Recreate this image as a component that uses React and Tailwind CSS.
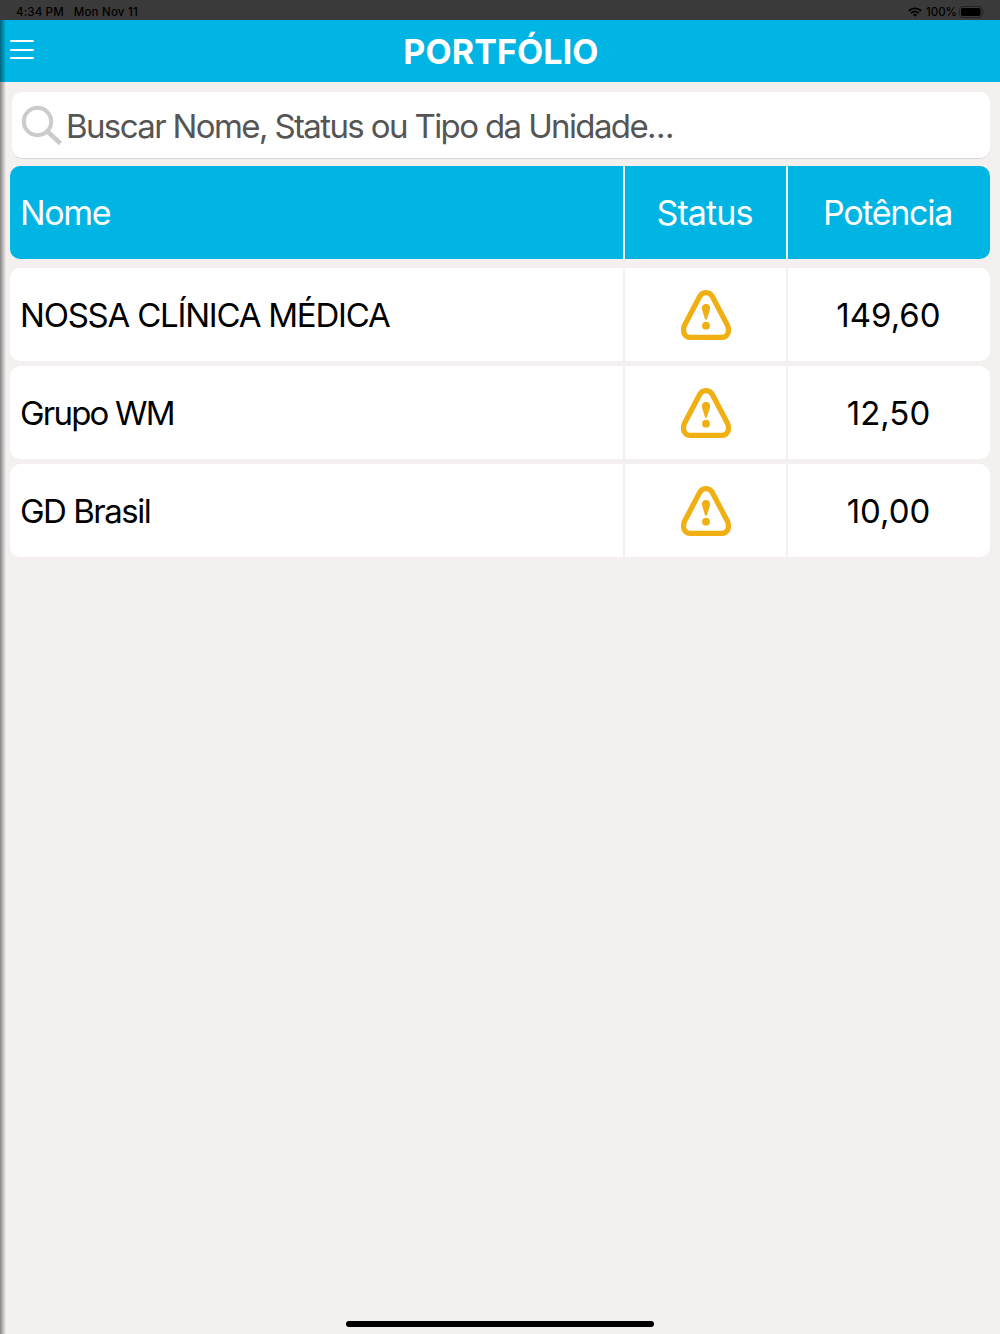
import React from "react";

const units = [
  { name: "NOSSA CLÍNICA MÉDICA", power: "149,60", tracking: "tracking-[-1.22px]" },
  { name: "Grupo WM", power: "12,50", tracking: "tracking-[-1.8px]" },
  { name: "GD Brasil", power: "10,00", tracking: "tracking-[-1.5px]" },
];

function WarningIcon() {
  return (
    <svg width="50" height="50" viewBox="0 0 50 50" fill="none">
      <path
        d="M18.800 6.300C22 1.400 28 1.400 31.200 6.300L46.600 35.500C49 42.500 46 47.300 41 47.300H9C4 47.300 1 42.500 3.400 35.500Z"
        stroke="#f0b013"
        strokeWidth="5.300"
        strokeLinejoin="round"
      />
      <path d="M25 14c2.700 0 4.400 2 4 4.700-.5 3.500-2.200 7-3.100 10.800h-1.800c-.9-3.800-2.600-7.300-3.100-10.800-.4-2.700 1.300-4.700 4-4.700Z" fill="#f0b013" />
      <circle cx="25" cy="35.700" r="3.900" fill="#f0b013" />
    </svg>
  );
}

function StatusBar() {
  return (
    <div className="h-5 bg-[#3b3a3a] flex items-center justify-between pl-4 pr-[15px] pt-1 text-[11.5px] leading-4 font-medium text-black">
      <div className="flex gap-[10px]">
        <span className="tracking-[0.15px]">4:34 PM</span>
        <span className="tracking-[0.2px]">Mon Nov 11</span>
      </div>
      <div className="flex items-center">
        <svg className="mr-1" width="14" height="10" viewBox="0 0 14 10" fill="none" stroke="black" strokeWidth="1.800">
          <path d="M.8 3.900c3.500-3.500 8.900-3.500 12.400 0M3.100 6.200c2.200-2.200 5.600-2.200 7.800 0" />
          <path d="M7 9.800 4.900 7.700c1.200-1.200 3-1.200 4.200 0Z" fill="black" stroke="none" />
        </svg>
        <span className="mr-[2px]">100%</span>
        <svg width="26" height="12" viewBox="0 0 26 12">
          <rect x=".5" y=".5" width="22.500" height="11" rx="3" fill="none" stroke="#242323" />
          <rect x="2" y="2" width="19.500" height="8" rx="1.700" fill="black" />
          <path d="M24.300 4v4c1.400-.6 1.400-3.400 0-4Z" fill="#242323" />
        </svg>
      </div>
    </div>
  );
}

export default function PortfolioScreen() {
  return (
    <div className="relative w-[1000px] h-[1334px] overflow-hidden bg-[#f4f0ef] flex flex-col font-['Inter','Liberation_Sans',sans-serif]">
      <StatusBar />

      {/* Header */}
      <header className="h-[62px] bg-[#00b5e3] grid grid-cols-[1fr_auto_1fr] items-center pl-[10px] pr-2">
        <button className="w-6 flex flex-col gap-[6.300px] -mt-[3px]">
          <span className="h-[2px] bg-white rounded-full"></span>
          <span className="h-[2px] bg-white rounded-full"></span>
          <span className="h-[2px] bg-white rounded-full"></span>
        </button>
        <h1 className="pt-[2px] text-[34px] leading-10 font-bold text-white tracking-[0.1px]">PORTFÓLIO</h1>
      </header>

      {/* Search */}
      <div className="mt-[10px] ml-3 mr-[10px] h-[67px] rounded-[10px] bg-white border-b border-[#d9d5d6] flex items-center pl-[9px]">
        <svg className="mt-[2px]" width="42" height="42" viewBox="0 0 42 42" fill="none" stroke="#cbcbcb" strokeWidth="4">
          <circle cx="16.500" cy="16.500" r="13.700" />
          <path d="M26 26 39.500 38.500" strokeWidth="4.500" />
        </svg>
        <span className="ml-[3px] pt-[2px] text-[33px] leading-10 text-[#555] tracking-[-1.62px] whitespace-nowrap">
          Buscar Nome, Status ou Tipo da Unidade<span className="tracking-[-0.5px]">...</span>
        </span>
      </div>

      {/* Table */}
      <div className="mt-[7px] mx-[10px] h-[93px] rounded-[10px] bg-[#00b5e3] grid grid-cols-[613px_163px_1fr] overflow-hidden text-[34px] text-white">
        <div className="flex items-center pl-[10px] tracking-[-1.35px]">Nome</div>
        <div className="flex items-center justify-center border-l-2 border-[#f4f0ef] pr-[2px] tracking-[-0.9px]">Status</div>
        <div className="flex items-center justify-center border-l-2 border-[#f4f0ef] pr-[3px] tracking-[-1.3px]">Potência</div>
      </div>
      <div className="mt-[9px] mx-[10px] flex flex-col gap-[5px] text-[33px] text-black">
        {units.map((unit) => (
          <div key={unit.name} className="h-[93px] rounded-[10px] bg-white grid grid-cols-[613px_163px_1fr]">
            <div className={`flex items-center pl-[10px] pt-[2px] ${unit.tracking}`}>{unit.name}</div>
            <div className="flex items-center justify-center border-l-2 border-[#f4f0ef]">
              <WarningIcon />
            </div>
            <div className="flex items-center justify-center border-l-2 border-[#f4f0ef] pt-[2px] pr-px">{unit.power}</div>
          </div>
        ))}
      </div>

      {/* Drawer edge shadow */}
      <div className="absolute left-0 top-5 bottom-0 w-[6px] bg-linear-to-r from-black/45 to-transparent"></div>

      {/* Home indicator */}
      <div className="mt-auto mb-[7px] self-center w-[308px] h-[6px] rounded-full bg-black"></div>
    </div>
  );
}
